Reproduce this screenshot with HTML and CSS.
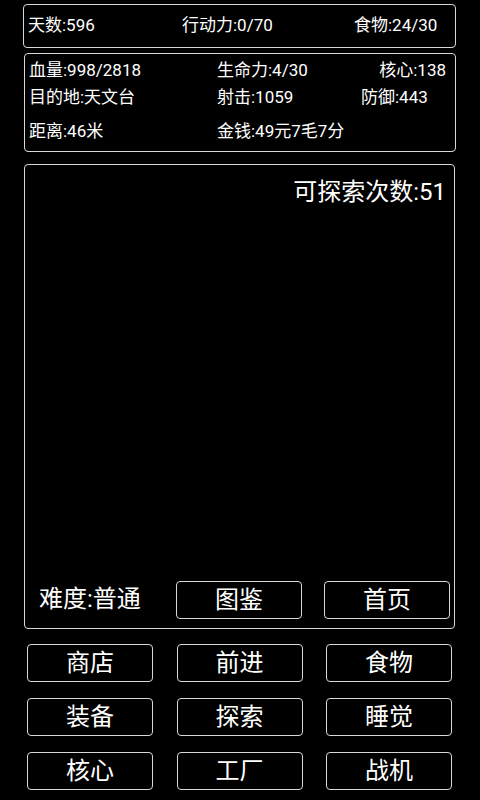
FILE: index.html
```html
<!DOCTYPE html>
<html lang="zh">
<head>
<meta charset="utf-8">
<link rel="stylesheet" href="styles.css">
</head>
<body>
<div class="screen">
  <div class="box top">
    <span>天数:596</span>
    <span>行动力:0/70</span>
    <span>食物:24/30</span>
  </div>
  <div class="box stats">
    <div class="row r1">
      <span>血量:998/2818</span>
      <span>生命力:4/30</span>
      <span class="right">核心:138</span>
    </div>
    <div class="row r2">
      <span>目的地:天文台</span>
      <span>射击:1059</span>
      <span>防御:443</span>
    </div>
    <div class="row r3">
      <span>距离:46米</span>
      <span>金钱:49元7毛7分</span>
      <span></span>
    </div>
  </div>
  <div class="box main">
    <div class="explore">可探索次数:51</div>
    <div class="spacer"></div>
    <div class="footer">
      <span class="level">难度:普通</span>
      <div class="btn">图鉴</div>
      <div class="btn">首页</div>
    </div>
  </div>
  <div class="grid">
    <div class="btn">商店</div>
    <div class="btn">前进</div>
    <div class="btn">食物</div>
    <div class="btn">装备</div>
    <div class="btn">探索</div>
    <div class="btn">睡觉</div>
    <div class="btn">核心</div>
    <div class="btn">工厂</div>
    <div class="btn">战机</div>
  </div>
</div>
</body>
</html>
```
FILE: styles.css
```css
html, body {
  margin: 0;
  padding: 0;
  background: #000;
}
body {
  width: 480px;
  height: 800px;
  overflow: hidden;
  color: #fff;
  font-family: Roboto, "Noto Sans CJK SC", sans-serif;
}
.screen {
  display: flex;
  flex-direction: column;
  padding-top: 4px;
}
.box {
  border: 1.5px solid #d8d8d8;
  border-radius: 4px;
  box-sizing: border-box;
}
.top {
  margin: 0 24px 0 23px;
  height: 44px;
  display: grid;
  grid-template-columns: 154px 172px 1fr;
  align-items: center;
  padding: 0 0 5px 4px;
  font-size: 17px;
}
.stats {
  margin: 5px 24px 0 24px;
  height: 99px;
  padding: 1px 9px 0 4px;
  font-size: 17px;
}
.row {
  display: grid;
  grid-template-columns: 188px 144px 1fr;
  align-items: center;
}
.r1 { height: 26px; }
.r2 { height: 28px; }
.r3 { height: 28px; margin-top: 6px; }
.right { text-align: right; }
.main {
  margin: 12px 25px 0 24px;
  height: 465px;
  display: flex;
  flex-direction: column;
  padding: 12px 8px 7px 14px;
}
.explore {
  font-size: 24px;
  text-align: right;
  line-height: 30px;
}
.spacer { flex: 1; }
.footer {
  display: flex;
  align-items: center;
  margin-right: -4px;
}
.level {
  font-size: 24px;
  width: 137px;
  padding-bottom: 7px;
}
.footer .btn + .btn { margin-left: 22px; }
.btn {
  width: 126px;
  height: 38px;
  box-sizing: border-box;
  border: 1.5px solid #d8d8d8;
  border-radius: 4px;
  display: flex;
  align-items: center;
  justify-content: center;
  font-size: 24px;
  padding-bottom: 6px;
}
.grid {
  margin: 15px 28px 0 27px;
  display: grid;
  grid-template-columns: repeat(3, 126px);
  justify-content: space-between;
  row-gap: 16px;
}
```
